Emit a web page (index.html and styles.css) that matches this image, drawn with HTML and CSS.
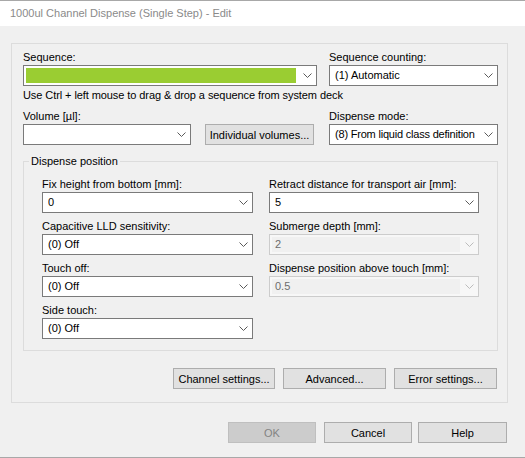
FILE: index.html
```html
<!DOCTYPE html>
<html>
<head>
<meta charset="utf-8">
<link rel="stylesheet" href="styles.css">
</head>
<body>
<div class="window">
  <div class="titlebar">1000ul Channel Dispense (Single Step) - Edit</div>
  <div class="group">
    <div class="top-grid">
      <div class="field">
        <div class="label">Sequence:</div>
        <div class="combo seq">
          <div class="val"><span class="green"></span></div>
          <svg class="chev" viewBox="0 0 9 5"><polyline points="0.5,0.5 4.5,4.5 8.5,0.5"/></svg>
        </div>
      </div>
      <div class="field">
        <div class="label">Sequence counting:</div>
        <div class="combo">
          <div class="val">(1) Automatic</div>
          <svg class="chev" viewBox="0 0 9 5"><polyline points="0.5,0.5 4.5,4.5 8.5,0.5"/></svg>
        </div>
      </div>
      <div class="hint">Use Ctrl + left mouse to drag &amp; drop a sequence from system deck</div>
      <div class="field row3">
        <div class="label">Volume [µl]:</div>
        <div class="vol-row">
          <div class="combo vol">
            <div class="val"></div>
            <svg class="chev" viewBox="0 0 9 5"><polyline points="0.5,0.5 4.5,4.5 8.5,0.5"/></svg>
          </div>
          <button class="btn indiv">Individual volumes...</button>
        </div>
      </div>
      <div class="field row3">
        <div class="label">Dispense mode:</div>
        <div class="combo">
          <div class="val tight">(8) From liquid class definition</div>
          <svg class="chev" viewBox="0 0 9 5"><polyline points="0.5,0.5 4.5,4.5 8.5,0.5"/></svg>
        </div>
      </div>
    </div>

    <fieldset class="dispos">
      <legend>Dispense position</legend>
      <div class="dp-grid">
        <div class="col">
          <div class="field">
            <div class="label">Fix height from bottom [mm]:</div>
            <div class="combo">
              <div class="val">0</div>
              <svg class="chev" viewBox="0 0 9 5"><polyline points="0.5,0.5 4.5,4.5 8.5,0.5"/></svg>
            </div>
          </div>
          <div class="field">
            <div class="label">Capacitive LLD sensitivity:</div>
            <div class="combo">
              <div class="val">(0) Off</div>
              <svg class="chev" viewBox="0 0 9 5"><polyline points="0.5,0.5 4.5,4.5 8.5,0.5"/></svg>
            </div>
          </div>
          <div class="field">
            <div class="label">Touch off:</div>
            <div class="combo">
              <div class="val">(0) Off</div>
              <svg class="chev" viewBox="0 0 9 5"><polyline points="0.5,0.5 4.5,4.5 8.5,0.5"/></svg>
            </div>
          </div>
          <div class="field">
            <div class="label">Side touch:</div>
            <div class="combo">
              <div class="val">(0) Off</div>
              <svg class="chev" viewBox="0 0 9 5"><polyline points="0.5,0.5 4.5,4.5 8.5,0.5"/></svg>
            </div>
          </div>
        </div>
        <div class="col">
          <div class="field">
            <div class="label">Retract distance for transport air [mm]:</div>
            <div class="combo">
              <div class="val">5</div>
              <svg class="chev" viewBox="0 0 9 5"><polyline points="0.5,0.5 4.5,4.5 8.5,0.5"/></svg>
            </div>
          </div>
          <div class="field">
            <div class="label">Submerge depth [mm]:</div>
            <div class="combo disabled">
              <div class="val">2</div>
              <svg class="chev" viewBox="0 0 9 5"><polyline points="0.5,0.5 4.5,4.5 8.5,0.5"/></svg>
            </div>
          </div>
          <div class="field">
            <div class="label">Dispense position above touch [mm]:</div>
            <div class="combo disabled">
              <div class="val">0.5</div>
              <svg class="chev" viewBox="0 0 9 5"><polyline points="0.5,0.5 4.5,4.5 8.5,0.5"/></svg>
            </div>
          </div>
        </div>
      </div>
    </fieldset>

    <div class="actions">
      <button class="btn w102">Channel settings...</button>
      <button class="btn w103">Advanced...</button>
      <button class="btn w103">Error settings...</button>
    </div>
  </div>

  <div class="dialog-buttons">
    <button class="btn ok" disabled>OK</button>
    <button class="btn cancel">Cancel</button>
    <button class="btn help">Help</button>
  </div>
</div>
</body>
</html>
```

FILE: styles.css
```css
* { box-sizing: border-box; }
html, body { margin: 0; padding: 0; }
body {
  background: #f0f0f0;
  font-family: "Liberation Sans", Arial, sans-serif;
  font-size: 11px;
  color: #000;
}
.window {
  width: 525px;
  height: 458px;
  border-top: 1px solid #a8a8a8;
  border-bottom: 1px solid #a8a8a8;
  display: flex;
  flex-direction: column;
}
.titlebar {
  height: 25px;
  line-height: 25px;
  background: #fff;
  color: #8a8a8a;
  padding-left: 10px;
  white-space: nowrap;
}
.group {
  margin: 17px 17px 0 11px;
  border: 1px solid #dcdcdc;
  padding: 5px 9px 13px 11px;
}
.top-grid {
  display: grid;
  grid-template-columns: 294px 169px;
  column-gap: 12px;
}
.label {
  line-height: 16px;
  white-space: nowrap;
}
.hint {
  grid-column: 1 / -1;
  margin-top: 1px;
  line-height: 16px;
  white-space: nowrap;
  letter-spacing: -0.08px;
}
.row3 { margin-top: 5px; }
.combo {
  height: 21px;
  border: 1px solid #7a7a7a;
  background: #fff;
  display: flex;
  align-items: center;
  padding-left: 5px;
}
.combo .val {
  flex: 1;
  min-width: 0;
  line-height: 19px;
  height: 19px;
  white-space: nowrap;
  overflow: hidden;
}
.combo .val.tight { letter-spacing: -0.2px; }
.chev {
  width: 9px;
  height: 5px;
  margin-right: 4px;
  flex: none;
  fill: none;
  stroke: #5a5a5a;
  stroke-width: 1;
}
.combo.seq { padding-left: 2px; }
.combo.seq .val { display: flex; align-items: center; }
.green {
  display: block;
  width: 270px;
  height: 15px;
  background: #9acd32;
}
.vol-row {
  display: flex;
  gap: 14px;
}
.combo.vol { width: 168px; }
.btn {
  height: 21px;
  border: 1px solid #adadad;
  background: #e1e1e1;
  font: inherit;
  color: #000;
  padding: 0;
  margin: 0;
  white-space: nowrap;
}
.btn.indiv { width: 109px; }
.combo.disabled {
  border-color: #cccccc;
  background: #f7f7f7;
  padding-left: 2px;
}
.combo.disabled .val {
  color: #6d6d6d;
  background: #f0f0f0;
  height: 15px;
  line-height: 15px;
  padding-left: 3px;
  margin-right: 5px;
}
.combo.disabled .chev { stroke: #bcbcbc; }

.dispos {
  margin: 8px 0 0;
  padding: 0;
  border: 1px solid #dcdcdc;
  min-width: 0;
}
.dispos legend {
  margin-left: 5px;
  padding: 0 2px;
  line-height: 16px;
}
.dp-grid {
  display: grid;
  grid-template-columns: 211px 210px;
  column-gap: 16px;
  padding: 7px 18px 11px 18px;
}
.col .field + .field { margin-top: 5px; }

.actions {
  display: flex;
  justify-content: flex-end;
  gap: 8px;
  margin-top: 17px;
  padding-right: 1px;
}
.w102 { width: 102px; }
.w103 { width: 103px; }

.dialog-buttons {
  display: flex;
  justify-content: flex-end;
  margin-top: 19px;
  padding-right: 18px;
}
.btn.ok {
  width: 88px;
  margin-right: 8px;
  background: #cccccc;
  border-color: #bfbfbf;
  color: #838383;
}
.btn.cancel { width: 88px; margin-right: 6px; }
.btn.help { width: 89px; }
```
